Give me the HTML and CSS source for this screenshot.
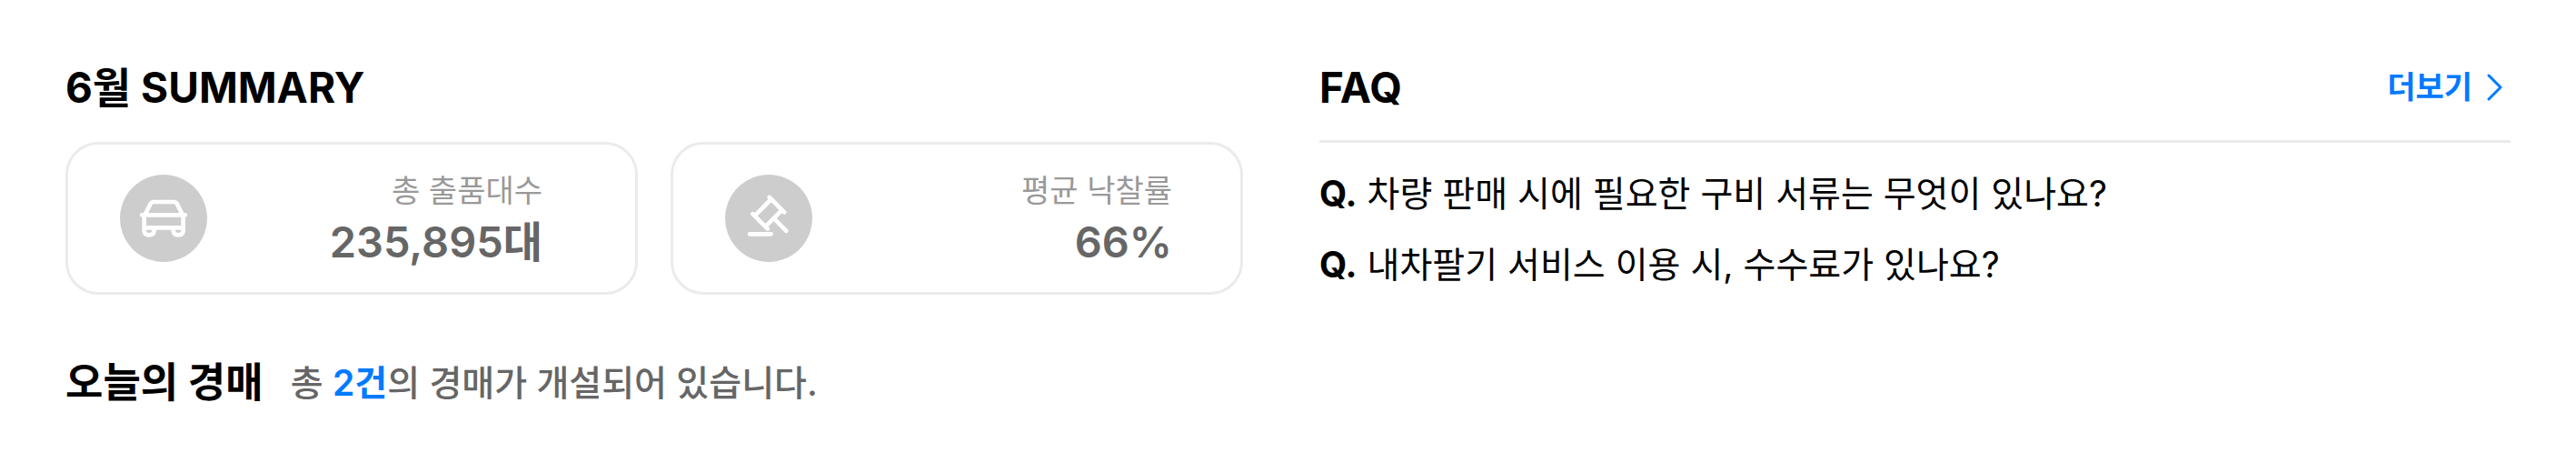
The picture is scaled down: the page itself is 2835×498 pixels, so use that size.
FILE: index.html
```html
<!DOCTYPE html>
<html lang="ko">
<head>
<meta charset="utf-8">
<title>6월 SUMMARY</title>
<link rel="stylesheet" href="styles.css">
</head>
<body>
<main class="page">
  <div class="columns">
    <section class="summary">
      <h2 class="title">6월 SUMMARY</h2>
      <div class="cards">
        <article class="card">
          <svg class="icon" viewBox="0 0 96 96" aria-hidden="true">
            <circle class="disc" cx="48" cy="48" r="48"/>
            <path class="line" d="M24.2 44.3H71.8M27.5 44.3 33.5 32.3Q34.7 30 37.3 30H59.2Q61.8 30 63 32.3L69 44.3M26.7 44.3V61.2Q26.7 66.3 32 66.3Q37.6 66.3 37.6 61V58.4M69.6 44.3V61.2Q69.6 66.3 64.3 66.3Q58.7 66.3 58.7 61V58.4M26.7 58.4H69.6"/>
          </svg>
          <dl class="stat">
            <dt class="label">총 출품대수</dt>
            <dd class="value">235,895대</dd>
          </dl>
        </article>
        <article class="card card-rate">
          <svg class="icon" viewBox="0 0 96 96" aria-hidden="true">
            <circle class="disc" cx="48" cy="48" r="48"/>
            <path class="line" d="M48.8 25 65.2 41.3M30.4 43.2 46.8 59.6M50.8 27 33 44.8M62.6 38.8 44.8 56.6M54 48.4 67.3 61.8M27 65.3H50.6"/>
          </svg>
          <dl class="stat">
            <dt class="label">평균 낙찰률</dt>
            <dd class="value">66%</dd>
          </dl>
        </article>
      </div>
    </section>
    <section class="faq">
      <header class="faq-head">
        <h2 class="title">FAQ</h2>
        <a class="more" href="#faq">더보기
          <svg class="chevron" viewBox="0 0 18 30" aria-hidden="true"><path d="M2 2 15 15 2 28"/></svg>
        </a>
      </header>
      <ul class="questions">
        <li><a class="question" href="#q1"><strong class="q">Q.</strong>차량 판매 시에 필요한 구비 서류는 무엇이 있나요?</a></li>
        <li><a class="question" href="#q2"><strong class="q">Q.</strong>내차팔기 서비스 이용 시, 수수료가 있나요?</a></li>
      </ul>
    </section>
  </div>
  <section class="today">
    <h2 class="title today-title">오늘의 경매</h2>
    <p class="notice">총 <b class="count">2건</b>의 경매가 개설되어 있습니다.</p>
  </section>
</main>
</body>
</html>
```
FILE: styles.css
```css
* {
  box-sizing: border-box;
  margin: 0;
  padding: 0;
}

body {
  background: #fff;
  color: #000;
  font-family: Inter, "Noto Sans CJK KR", sans-serif;
}

.page {
  padding: 60px 72px;
}

.columns {
  display: grid;
  grid-template-columns: 1296fr 1311fr;
  gap: 84px;
}

.title {
  font-size: 46px;
  font-weight: 700;
  line-height: 72px;
}

.cards {
  display: grid;
  grid-template-columns: 1fr 1fr;
  gap: 36px;
  margin-top: 24px;
}

.card {
  display: flex;
  align-items: center;
  justify-content: space-between;
  padding: 24px 102px 24px 57px;
  border: 3px solid #ebebeb;
  border-radius: 36px;
}

.card-rate {
  padding-right: 75px;
}

.icon {
  width: 96px;
  height: 96px;
}

.disc {
  fill: #cdcdcd;
}

.line {
  fill: none;
  stroke: #fff;
  stroke-width: 4.7;
  stroke-linecap: round;
  stroke-linejoin: round;
}

.stat {
  padding-bottom: 2px;
  text-align: right;
}

.label {
  color: #999;
  font-size: 34px;
  line-height: 54px;
}

.value {
  color: #666;
  font-size: 47px;
  font-weight: 600;
  line-height: 58px;
}

.faq-head {
  display: flex;
  align-items: center;
  justify-content: space-between;
  padding-bottom: 22px;
  border-bottom: 3px solid #ebebeb;
}

.more {
  display: flex;
  align-items: center;
  gap: 16px;
  padding-right: 8px;
  color: #007aff;
  font-size: 34px;
  font-weight: 600;
  line-height: 54px;
  text-decoration: none;
}

.chevron {
  width: 18px;
  height: 30px;
  fill: none;
  stroke: #007aff;
  stroke-width: 3;
  stroke-linecap: round;
  stroke-linejoin: round;
}

.questions {
  display: grid;
  gap: 18px;
  margin-top: 26px;
  list-style: none;
}

.question {
  display: flex;
  gap: 11px;
  color: #000;
  font-size: 39px;
  line-height: 60px;
  text-decoration: none;
}

.q {
  font-weight: 700;
}

.today {
  display: flex;
  align-items: center;
  gap: 30px;
  margin-top: 61px;
}

.today-title {
  font-size: 45px;
}

.notice {
  color: #666;
  font-size: 39px;
  font-weight: 500;
  line-height: 60px;
}

.count {
  color: #007aff;
  font-weight: 600;
}
```
